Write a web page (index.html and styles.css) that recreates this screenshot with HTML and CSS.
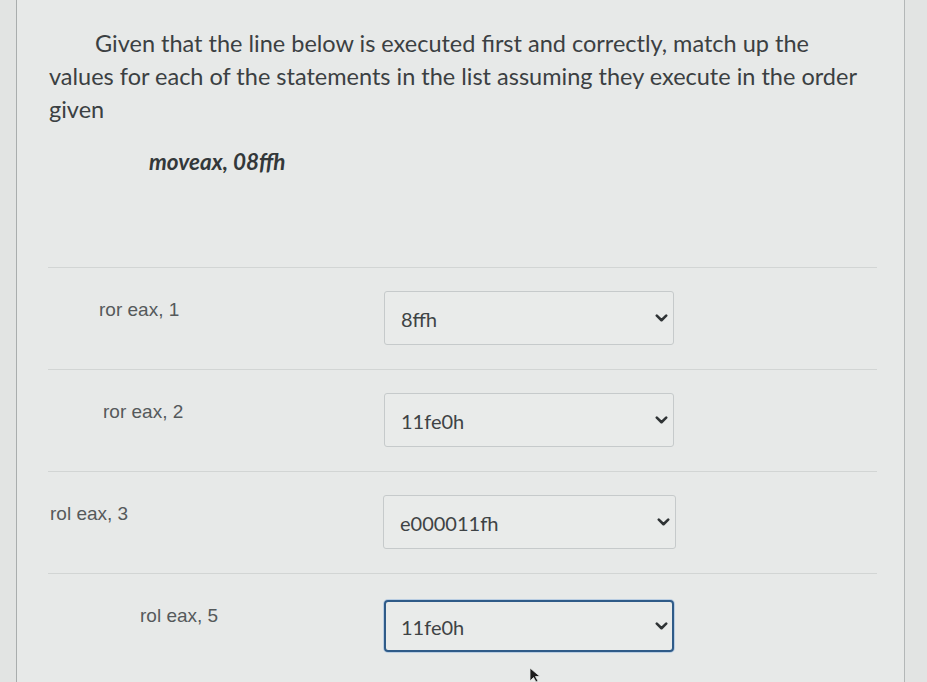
FILE: index.html
```html
<!DOCTYPE html>
<html lang="en">
<head>
<meta charset="utf-8">
<title>Matching question</title>
<link rel="stylesheet" href="styles.css">
</head>
<body>
<div class="card">
  <p class="prompt">Given that the line below is executed first and correctly, match up the values for each of the statements in the list assuming they execute in the order given</p>
  <p class="code"><em><strong>moveax, 08ffh</strong></em></p>
  <div class="matches">
    <div class="row">
      <div class="label pad-a">ror eax, 1</div>
      <div class="select"><span>8ffh</span><svg class="chev" width="13" height="8" viewBox="0 0 13 8"><path d="M1.8 1.6 L6.5 6.2 L11.2 1.6" fill="none" stroke="#2f3335" stroke-width="2.6" stroke-linecap="round" stroke-linejoin="round"/></svg></div>
    </div>
    <div class="row">
      <div class="label pad-b">ror eax, 2</div>
      <div class="select"><span>11fe0h</span><svg class="chev" width="13" height="8" viewBox="0 0 13 8"><path d="M1.8 1.6 L6.5 6.2 L11.2 1.6" fill="none" stroke="#2f3335" stroke-width="2.6" stroke-linecap="round" stroke-linejoin="round"/></svg></div>
    </div>
    <div class="row">
      <div class="label pad-c">rol eax, 3</div>
      <div class="select wide"><span>e000011fh</span><svg class="chev" width="13" height="8" viewBox="0 0 13 8"><path d="M1.8 1.6 L6.5 6.2 L11.2 1.6" fill="none" stroke="#2f3335" stroke-width="2.6" stroke-linecap="round" stroke-linejoin="round"/></svg></div>
    </div>
    <div class="row">
      <div class="label pad-d">rol eax, 5</div>
      <div class="select focused"><span>11fe0h</span><svg class="chev" width="13" height="8" viewBox="0 0 13 8"><path d="M1.8 1.6 L6.5 6.2 L11.2 1.6" fill="none" stroke="#2f3335" stroke-width="2.6" stroke-linecap="round" stroke-linejoin="round"/></svg></div>
    </div>
  </div>
  <svg class="cursor" width="12" height="16" viewBox="0 0 12 16"><path d="M1 1 L1 14 L4.5 10.5 L7 15 L9 14 L6.5 9.5 L11 9.5 Z" fill="#1c1c1c" stroke="#e6e8e7" stroke-width="0.8"/></svg>
</div>
</body>
</html>
```
FILE: styles.css
```css
html, body {
  margin: 0;
  padding: 0;
  height: 100%;
}
body {
  background: #e2e4e3;
  overflow: hidden;
}
.card {
  position: relative;
  margin-left: 16px;
  width: 889px;
  height: 100%;
  border-left: 1px solid #a9adad;
  border-right: 1px solid #b3b7b7;
  background: #e7e9e8;
  padding: 27px 0 0 32px;
  box-sizing: border-box;
}
.prompt {
  margin: 0;
  width: 815px;
  font-family: Lato, "Open Sans", sans-serif;
  font-size: 23.5px;
  line-height: 33px;
  color: #3b4042;
  text-indent: 46px;
}
.code {
  margin: 22px 0 0 100px;
  font-family: Lato, "Open Sans", sans-serif;
  font-size: 22.5px;
  line-height: 28px;
  color: #33383a;
}
.matches {
  margin-top: 91px;
  width: 829px;
  margin-left: -1px;
}
.row {
  display: flex;
  align-items: flex-start;
  border-top: 1px solid #d2d5d4;
  padding: 23px 0 24px;
}
.label {
  width: 336px;
  flex: none;
  box-sizing: border-box;
  margin-top: 8px;
  font-family: "Liberation Sans", Arial, sans-serif;
  font-size: 19px;
  line-height: 22px;
  color: #55595b;
}
.pad-a { padding-left: 51px; }
.pad-b { padding-left: 55px; }
.pad-c { padding-left: 2px; }
.pad-d { padding-left: 92px; }
.select {
  width: 290px;
  height: 54px;
  box-sizing: border-box;
  border: 1px solid #c6cacb;
  border-radius: 3px;
  background: #e9ebea;
  display: flex;
  align-items: center;
  justify-content: space-between;
  padding: 0 5px 0 16px;
  font-family: Lato, "Open Sans", sans-serif;
  font-size: 20px;
  color: #3e4345;
}
.select span {
  padding-top: 2px;
}
.select.wide {
  width: 293px;
  margin-left: -1px;
}
.select.focused {
  border: 2px solid #2f5b88;
  border-radius: 4px;
  box-shadow: 0 0 0 1px #b9cde2;
  padding-left: 15px;
  padding-right: 4px;
  height: 52px;
  margin-top: 3px;
}
.chev {
  flex: none;
}
.cursor {
  position: absolute;
  left: 512px;
  top: 667px;
}
```
